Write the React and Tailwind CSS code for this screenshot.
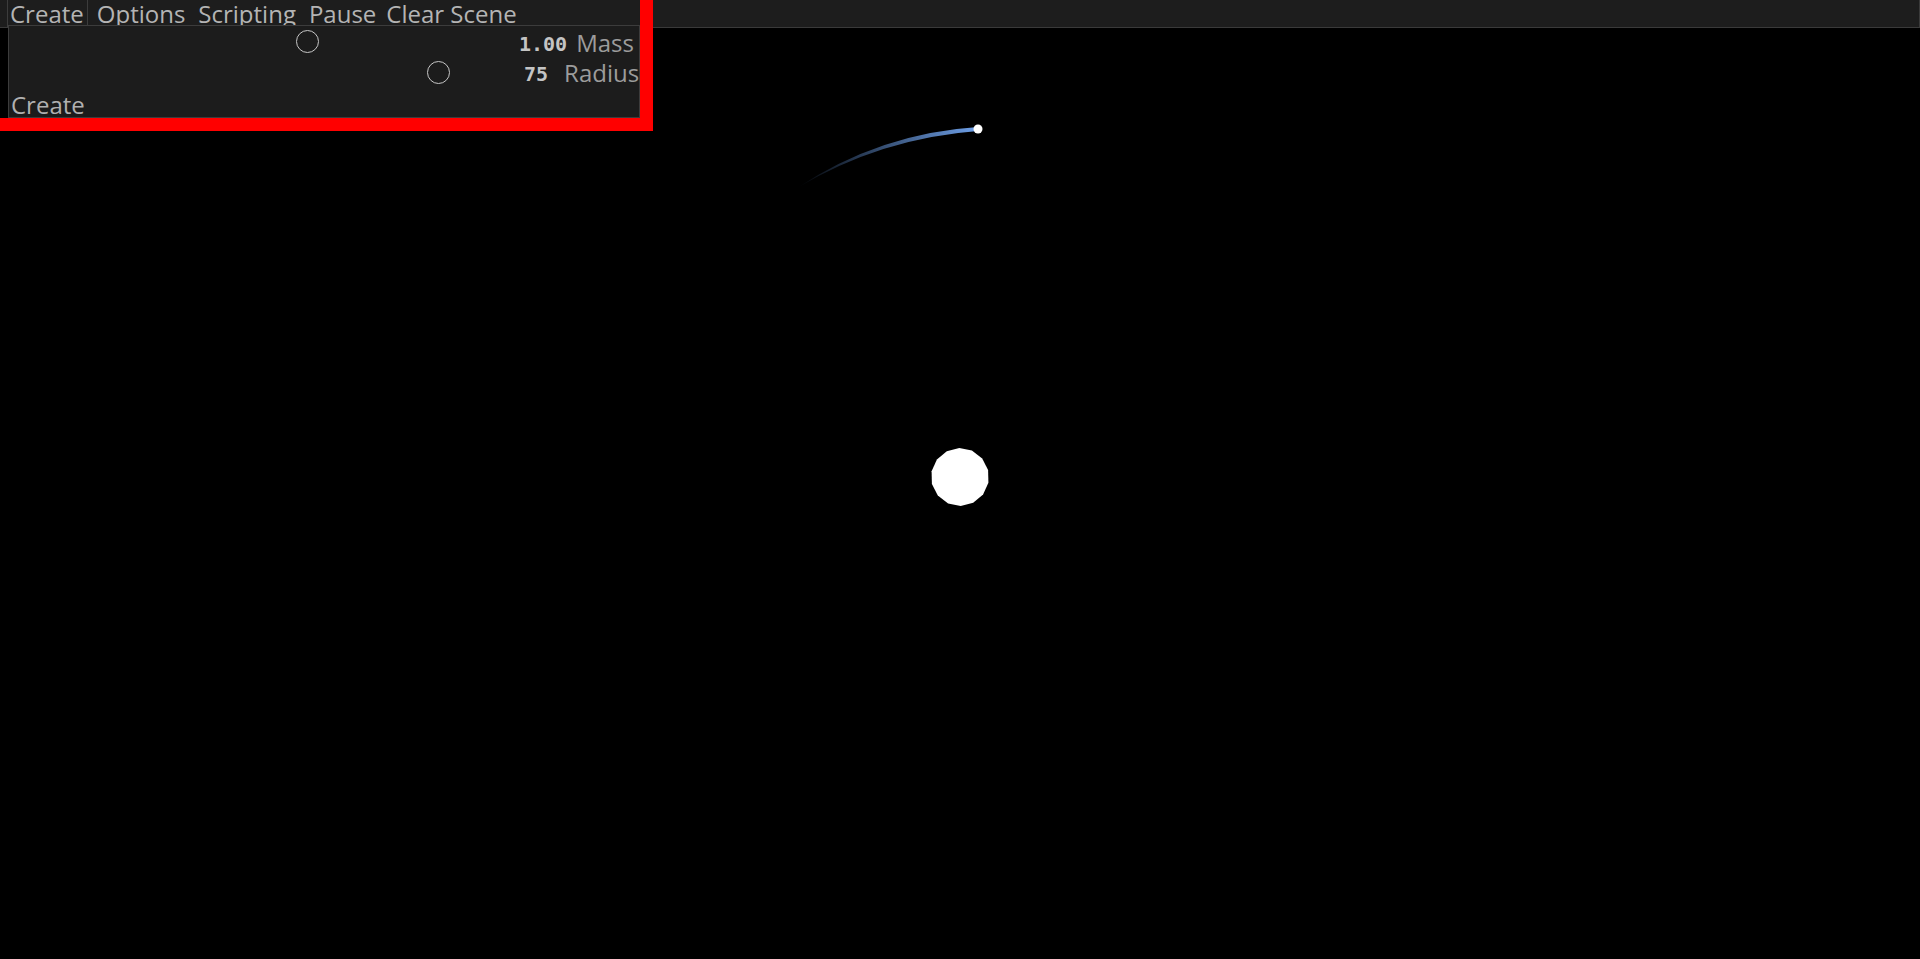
import React from "react"

const menuItems = ["Create", "Options", "Scripting", "Pause", "Clear Scene"]

// body in the middle of the scene, drawn as a low-poly disc
const bodyPoints = Array.from({ length: 14 }, (_, i) => {
  const a = (i / 14) * Math.PI * 2 + 0.2
  return `${(960 + Math.cos(a) * 29).toFixed(1)},${(477 + Math.sin(a) * 29).toFixed(1)}`
}).join(" ")

const Knob = ({ className }) => (
  <div
    className={`w-[23px] h-[23px] shrink-0 rounded-full border-[1.5px] border-[#c6c6c6] ${className}`}
  ></div>
)

const App = () => {
  return (
    <div
      className="relative w-full h-[959px] bg-black overflow-hidden"
      style={{ fontFamily: "'Open Sans', 'Noto Sans', sans-serif" }}
    >
      {/* Main menu bar */}
      <div className="h-[28px] flex items-start gap-[6px] px-[7px] bg-[#1d1d1d] border-b border-r border-[#3a3a3a] text-[24px] leading-[28px] text-[#b4b4b4]">
        {menuItems.map((item, i) => (
          <div
            key={item}
            className={`h-[27px] pl-[2px] pr-[3px] whitespace-nowrap border-x ${
              i === 0 ? "border-[#3c3c3c]" : "border-transparent"
            } ${i === 4 ? "-ml-[3px]" : ""}`}
          >
            {item}
          </div>
        ))}
      </div>

      {/* Scene */}
      <svg
        className="absolute inset-0 pointer-events-none"
        width="1920"
        height="959"
        viewBox="0 0 1920 959"
      >
        <defs>
          <linearGradient
            id="trail"
            gradientUnits="userSpaceOnUse"
            x1="797"
            y1="188"
            x2="978"
            y2="129"
          >
            <stop offset="0" stopColor="#6d9fe8" stopOpacity="0" />
            <stop offset="0.45" stopColor="#6d9fe8" stopOpacity="0.45" />
            <stop offset="1" stopColor="#6d9fe8" stopOpacity="1" />
          </linearGradient>
        </defs>
        <path
          d="M 797 188 Q 880 133 978 127 L 978 131 Q 881 138 797 188 Z"
          fill="url(#trail)"
        />
        <circle cx="978" cy="129" r="4.5" fill="#ffffff" />
        <polygon points={bodyPoints} fill="#ffffff" />
      </svg>

      {/* Create window */}
      <div className="absolute left-[8px] top-[25px] w-[632px] h-[93px] border border-[#3c3c3c] bg-[#1c1c1c] overflow-hidden pt-[2px]">
        <div className="flex items-start h-[30px]">
          <Knob className="ml-[287px] mt-[2px]" />
          <div className="ml-[200px] pt-[1px] font-bold text-[20px] leading-[30px] text-[#c4c4c4] font-['DejaVu_Sans_Mono',monospace]">
            1.00
          </div>
          <div className="ml-[9px] text-[24px] leading-[30px] text-[#9c9c9c]">
            Mass
          </div>
        </div>
        <div className="flex items-start h-[33px]">
          <Knob className="ml-[418px] mt-[3px]" />
          <div className="ml-[74px] pt-[1px] font-bold text-[20px] leading-[30px] text-[#c4c4c4] font-['DejaVu_Sans_Mono',monospace]">
            75
          </div>
          <div className="ml-[16px] text-[24px] leading-[30px] text-[#9c9c9c]">
            Radius
          </div>
        </div>
        <div className="-mt-[1px] pl-[2px] text-[24px] leading-[30px] text-[#b0b0b0]">
          Create
        </div>
      </div>

      {/* Red highlight marker */}
      <div className="absolute left-0 top-0 w-[653px] h-[131px] pointer-events-none">
        <div className="absolute right-0 top-0 w-[13px] h-full bg-[#ff0000]"></div>
        <div className="absolute left-0 bottom-0 w-full h-[13px] bg-[#ff0000]"></div>
      </div>
    </div>
  )
}

export default App
